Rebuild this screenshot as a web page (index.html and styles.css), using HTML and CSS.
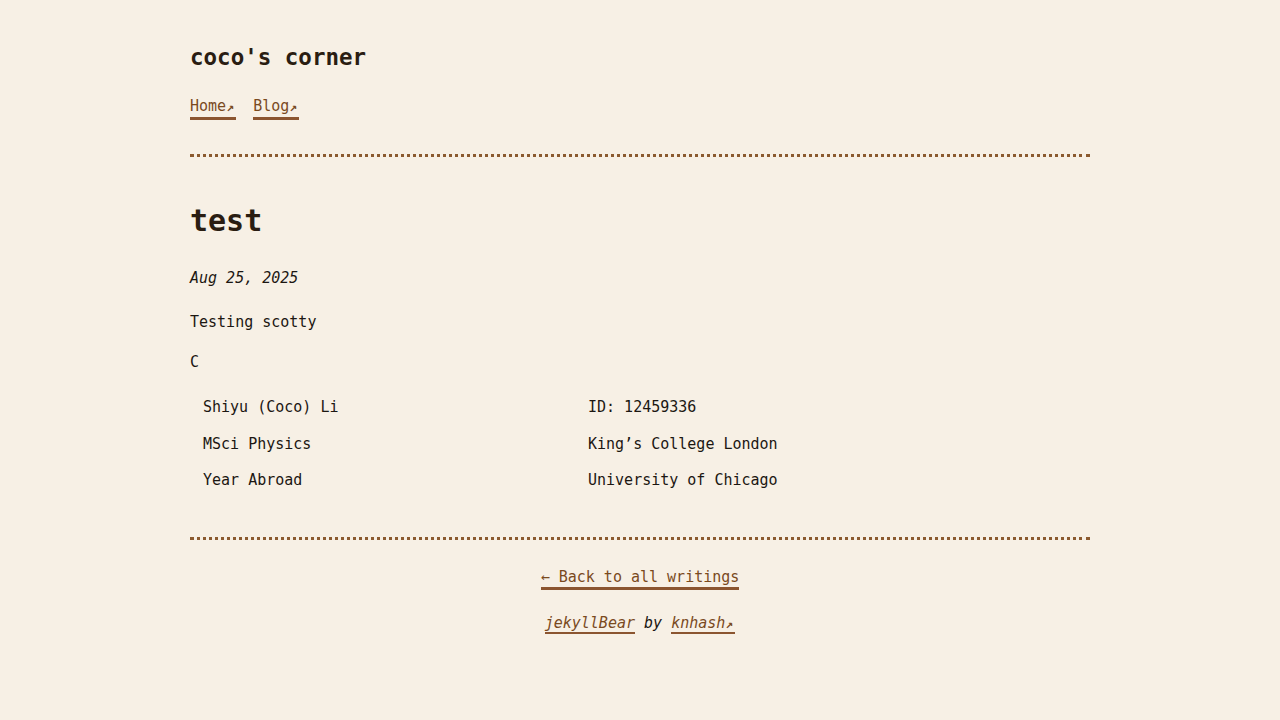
FILE: index.html
```html
<!DOCTYPE html>
<html lang="en">
<head>
<meta charset="utf-8">
<title>test | coco's corner</title>
<link rel="stylesheet" href="styles.css">
</head>
<body>
<div class="page">
  <header class="site-header">
    <a class="site-title" href="#">coco's corner</a>
    <nav class="nav">
      <a class="link" href="#">Home<span class="ext">↗</span></a>
      <a class="link" href="#">Blog<span class="ext">↗</span></a>
    </nav>
  </header>
  <main class="post">
    <h1 class="post-title">test</h1>
    <p class="post-date"><i>Aug 25, 2025</i></p>
    <p class="para">Testing scotty</p>
    <p class="para para-tight">C</p>
    <div class="info">
      <div class="cell">Shiyu (Coco) Li</div><div class="cell">ID: 12459336</div>
      <div class="cell">MSci Physics</div><div class="cell">King’s College London</div>
      <div class="cell">Year Abroad</div><div class="cell">University of Chicago</div>
    </div>
  </main>
  <footer class="site-footer">
    <a class="link" href="#">← Back to all writings</a>
    <p class="credit"><a class="link" href="#">jekyllBear</a> by <a class="link" href="#">knhash<span class="ext">↗</span></a></p>
  </footer>
</div>
</body>
</html>
```
FILE: styles.css
```css
html, body {
  margin: 0;
  padding: 0;
  background: #f7f0e5;
}
body {
  font-family: "DejaVu Sans Mono", "Liberation Mono", monospace;
  font-size: 15px;
  color: #1c1712;
}
.page {
  width: 900px;
  margin: 0 auto;
  padding-top: 42px;
}
.site-header {
  display: flex;
  flex-direction: column;
  padding-bottom: 35px;
  border-bottom: 3px dotted #8b5a2f;
}
.site-title {
  font-size: 22.5px;
  font-weight: bold;
  color: #2a1d12;
  text-decoration: none;
  line-height: 30px;
}
.nav {
  display: flex;
  gap: 17px;
  margin-top: 24px;
  margin-bottom: -1px;
}
.link {
  color: #7a4a1e;
  text-decoration: none;
  border-bottom: 3px solid #8b5530;
  line-height: 20px;
}
.ext {
  display: inline-block;
  width: 10px;
  font-size: 0.85em;
  font-weight: bold;
}
.post {
  padding-top: 44px;
  padding-bottom: 38px;
  border-bottom: 3px dotted #8b5a2f;
}
.post-title {
  margin: 0;
  font-size: 30px;
  line-height: 40px;
  font-weight: bold;
  color: #2a1d12;
}
.post-date {
  margin: 27px 0 0;
  line-height: 20px;
}
.para {
  margin: 24px 0 0;
  line-height: 20px;
}
.para-tight {
  margin-top: 20px;
}
.info {
  display: grid;
  grid-template-columns: 385px 1fr;
  margin-top: 17px;
}
.cell {
  padding: 8px 13px;
  line-height: 20.5px;
}
.site-footer {
  display: flex;
  flex-direction: column;
  align-items: center;
  padding-top: 27px;
}
.credit {
  margin: 23px 0 0;
  font-style: italic;
  line-height: 20px;
}
```
